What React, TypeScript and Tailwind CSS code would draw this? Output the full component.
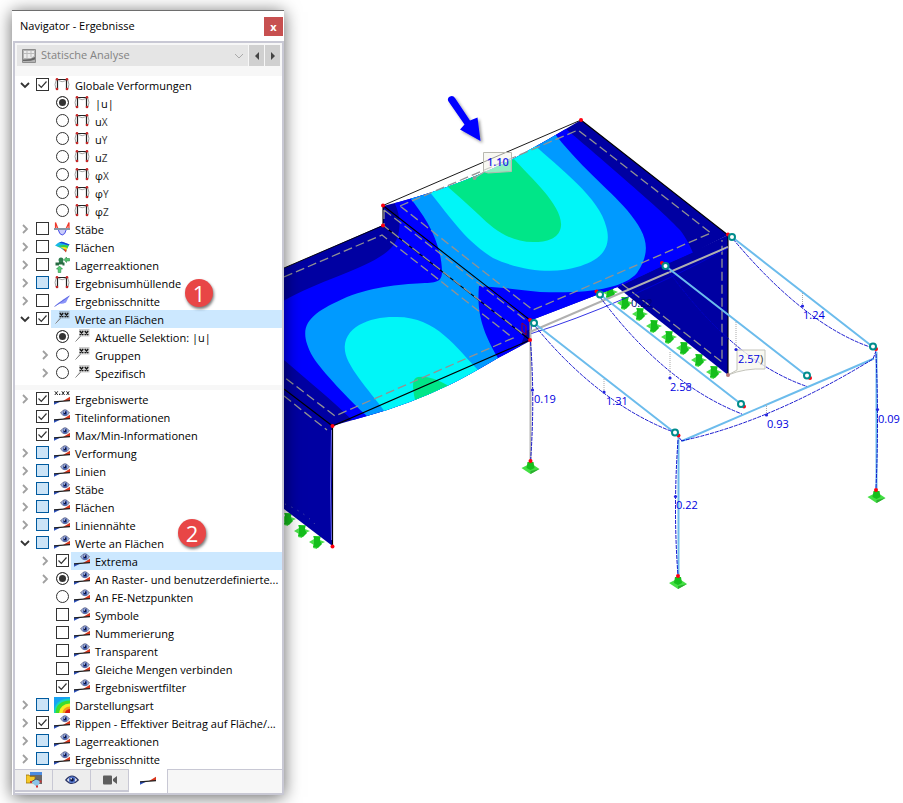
import React, { useState } from 'react';

type IconName = 'frame' | 'bars' | 'surface' | 'support' | 'section' | 'values' | 'numbers' | 'view' | 'plot';
type Control = 'radio' | 'checkbox';

interface TreeItem {
  id: string;
  label: React.ReactNode;
  icon: IconName;
  control: Control;
  checked?: boolean;
  partial?: boolean;
  level?: number;
  arrow?: 'open' | 'closed';
  selected?: boolean;
  group?: string;
}

const axis = (symbol: string, sub: string) => (
  <>
    {symbol}
    <span className="text-[10px] text-[#333]">{sub}</span>
  </>
);

const resultItems: TreeItem[] = [
  { id: 'deform', label: 'Globale Verformungen', icon: 'frame', control: 'checkbox', checked: true, arrow: 'open' },
  { id: 'u', label: '|u|', icon: 'frame', control: 'radio', checked: true, level: 1, group: 'deform' },
  { id: 'ux', label: axis('u', 'X'), icon: 'frame', control: 'radio', level: 1, group: 'deform' },
  { id: 'uy', label: axis('u', 'Y'), icon: 'frame', control: 'radio', level: 1, group: 'deform' },
  { id: 'uz', label: axis('u', 'Z'), icon: 'frame', control: 'radio', level: 1, group: 'deform' },
  { id: 'phix', label: axis('φ', 'X'), icon: 'frame', control: 'radio', level: 1, group: 'deform' },
  { id: 'phiy', label: axis('φ', 'Y'), icon: 'frame', control: 'radio', level: 1, group: 'deform' },
  { id: 'phiz', label: axis('φ', 'Z'), icon: 'frame', control: 'radio', level: 1, group: 'deform' },
  { id: 'members', label: 'Stäbe', icon: 'bars', control: 'checkbox', arrow: 'closed' },
  { id: 'surfaces', label: 'Flächen', icon: 'surface', control: 'checkbox', arrow: 'closed' },
  { id: 'reactions', label: 'Lagerreaktionen', icon: 'support', control: 'checkbox', arrow: 'closed' },
  { id: 'envelope', label: 'Ergebnisumhüllende', icon: 'frame', control: 'checkbox', partial: true, arrow: 'closed' },
  { id: 'sections', label: 'Ergebnisschnitte', icon: 'section', control: 'checkbox', arrow: 'closed' },
  { id: 'values', label: 'Werte an Flächen', icon: 'values', control: 'checkbox', checked: true, arrow: 'open', selected: true },
  { id: 'current', label: 'Aktuelle Selektion: |u|', icon: 'values', control: 'radio', checked: true, level: 1, group: 'values' },
  { id: 'groups', label: 'Gruppen', icon: 'values', control: 'radio', level: 1, arrow: 'closed', group: 'values' },
  { id: 'specific', label: 'Spezifisch', icon: 'values', control: 'radio', level: 1, arrow: 'closed', group: 'values' },
];

const displayItems: TreeItem[] = [
  { id: 'd-results', label: 'Ergebniswerte', icon: 'numbers', control: 'checkbox', checked: true, arrow: 'closed' },
  { id: 'd-title', label: 'Titelinformationen', icon: 'view', control: 'checkbox', checked: true },
  { id: 'd-maxmin', label: 'Max/Min-Informationen', icon: 'view', control: 'checkbox', checked: true },
  { id: 'd-deform', label: 'Verformung', icon: 'view', control: 'checkbox', partial: true, arrow: 'closed' },
  { id: 'd-lines', label: 'Linien', icon: 'view', control: 'checkbox', partial: true, arrow: 'closed' },
  { id: 'd-members', label: 'Stäbe', icon: 'view', control: 'checkbox', partial: true, arrow: 'closed' },
  { id: 'd-surfaces', label: 'Flächen', icon: 'view', control: 'checkbox', partial: true, arrow: 'closed' },
  { id: 'd-welds', label: 'Liniennähte', icon: 'view', control: 'checkbox', partial: true, arrow: 'closed' },
  { id: 'd-values', label: 'Werte an Flächen', icon: 'view', control: 'checkbox', partial: true, arrow: 'open' },
  { id: 'd-extrema', label: 'Extrema', icon: 'view', control: 'checkbox', checked: true, level: 1, arrow: 'closed', selected: true },
  { id: 'd-grid', label: 'An Raster- und benutzerdefinierte...', icon: 'view', control: 'radio', checked: true, level: 1, arrow: 'closed', group: 'points' },
  { id: 'd-mesh', label: 'An FE-Netzpunkten', icon: 'view', control: 'radio', level: 1, group: 'points' },
  { id: 'd-symbols', label: 'Symbole', icon: 'view', control: 'checkbox', level: 1 },
  { id: 'd-numbering', label: 'Nummerierung', icon: 'view', control: 'checkbox', level: 1 },
  { id: 'd-transparent', label: 'Transparent', icon: 'view', control: 'checkbox', level: 1 },
  { id: 'd-equal', label: 'Gleiche Mengen verbinden', icon: 'view', control: 'checkbox', level: 1 },
  { id: 'd-filter', label: 'Ergebniswertfilter', icon: 'view', control: 'checkbox', checked: true, level: 1 },
  { id: 'd-type', label: 'Darstellungsart', icon: 'plot', control: 'checkbox', partial: true, arrow: 'closed' },
  { id: 'd-ribs', label: 'Rippen - Effektiver Beitrag auf Fläche/...', icon: 'view', control: 'checkbox', checked: true, arrow: 'closed' },
  { id: 'd-reactions', label: 'Lagerreaktionen', icon: 'view', control: 'checkbox', partial: true, arrow: 'closed' },
  { id: 'd-sections', label: 'Ergebnisschnitte', icon: 'view', control: 'checkbox', partial: true, arrow: 'closed' },
];

const Wedge: React.FC = () => (
  <>
    <path d="M0 10.5H6.5L0 13.8Z" fill="#2b50c0" />
    <path d="M16 5.8V10H9Z" fill="#d8361c" />
    <path d="M0 10.8 16 9.6" stroke="#222" strokeWidth="1.2" />
  </>
);

const Eye: React.FC = () => (
  <>
    <path d="M6.6 4Q11 -2.5 15.4 4Q11 9.5 6.6 4Z" fill="#d5dcf2" stroke="#3a4470" strokeWidth=".8" />
    <circle cx="11" cy="3.9" r="2.5" fill="#4a66b8" />
    <circle cx="11" cy="3.9" r="1.4" fill="#0c1440" />
    <circle cx="10.3" cy="3" r=".7" fill="#fff" />
  </>
);

const icons: Record<IconName, React.ReactNode> = {
  frame: (
    <>
      <path d="M2.2 3Q0 7.5 2 12M13.8 3Q16 7.5 14 12M4.5 3.5Q8 6 12 3.5" fill="none" stroke="#999" strokeWidth=".9" />
      <path d="M3.5 12.500V2.500H12.500V12.500" fill="none" stroke="#222" strokeWidth="1.2" />
      <circle cx="3" cy="2.300" r="1.300" fill="#c62828" />
      <circle cx="13" cy="2.300" r="1.300" fill="#c62828" />
      <circle cx="3" cy="12" r="1.300" fill="#c62828" />
      <circle cx="13" cy="12" r="1.300" fill="#c62828" />
    </>
  ),
  bars: (
    <>
      <path d="M4 8H12.5Q11 14 8.2 14Q5.5 14 4 8Z" fill="#c9ccfb" stroke="#4a4fe6" />
      <path d="M1.5 8V1.5L4 8ZM15 8V1.5L12 8Z" fill="#fbc4bd" stroke="#ef3a2c" strokeWidth="1.2" />
      <path d="M0 8H16" stroke="#8696a6" strokeWidth="2" />
    </>
  ),
  surface: (
    <>
      <path d="M1 6.5Q5 2 9 3L15.5 5.5Q13 9 12 13Q7 8.5 1 6.5Z" fill="#18b8e8" />
      <path d="M5 3.8Q7 2.5 9 3L15.500 5.500L14.500 6.500Q9 4.500 5 3.8Z" fill="#1746d8" />
      <path d="M3 7.5Q8 5 14.500 6.500L13.300 9.500Q9 7 3 7.5Z" fill="#3bd23d" />
      <path d="M6 8.5Q10 7.500 13.300 9L12.500 11.500Q9 9 6 8.5Z" fill="#f6e61c" />
      <path d="M9 10Q11 10 12.500 11L12 13.500Z" fill="#ef3b1e" />
    </>
  ),
  support: (
    <>
      <circle cx="7" cy="3" r="2.5" fill="#2e7d4e" />
      <path d="M5 5H9L10.5 7.5H3.5ZM1.5 5.5H5V8.5H1.5ZM8.5 5.5H10.5V8.5H8.5Z" fill="#286c43" />
      <path d="M10 2.7 12.5 0V1.5H15.5V4H12.5V5.5Z" fill="#52c46e" stroke="#2a8a48" strokeWidth=".6" />
      <path d="M5.5 9 8.5 12H6.8V15.5H4.2V12H2.5Z" fill="#52d071" stroke="#2a8a48" strokeWidth=".6" />
    </>
  ),
  section: (
    <>
      <path d="M.5 13.500 4.500 9.800Q7 8.500 9 6.500L15.500 2.500 12 9.500Q8 11.500 6 10.500Z" fill="#8b95fa" />
      <path d="M.5 13.500 15.500 3" stroke="#5560d8" strokeWidth=".8" />
    </>
  ),
  values: (
    <>
      <path d="M5 0H15.500V7.500H7L1.500 12.500L5 7Z" fill="#000" fillOpacity=".2" />
      <path d="M1.500 12.500 6.500 7.500" stroke="#888" />
      <path d="M5.800 2 9.200 6M9.200 2 5.800 6M10.800 2 14.200 6M14.200 2 10.800 6" stroke="#111" strokeWidth="1.200" />
    </>
  ),
  numbers: (
    <>
      <path d="M.8 .3 3.800 4M3.800 .3 .8 4M7.800 .3 10.500 4M10.500 .3 7.800 4M12.500 .3 15.200 4M15.200 .3 12.500 4" stroke="#222" />
      <path d="M5 2.800H6.300V4.100H5Z" fill="#222" />
      <Wedge />
    </>
  ),
  view: (
    <>
      <Wedge />
      <Eye />
    </>
  ),
  plot: (
    <>
      <path d="M0 0H16V16H0Z" fill="#17a2f2" />
      <path d="M0 16Q0 2 16 1.500V16Z" fill="#16d6c0" />
      <path d="M1.500 16Q2 4 16 3.500V16Z" fill="#3ede2b" />
      <path d="M5 16Q6 7 16 6.500V16Z" fill="#f3ee22" />
      <path d="M8.500 16Q9 10 16 9.500V16Z" fill="#f59a1c" />
      <path d="M11 16Q11.500 12.500 16 12V16Z" fill="#d81e10" />
    </>
  ),
};

const Icon: React.FC<{ name: IconName }> = ({ name }) => (
  <svg viewBox="0 0 16 16" className="size-4 shrink-0" aria-hidden="true">
    {icons[name]}
  </svg>
);

const Tick: React.FC<{ item: TreeItem }> = ({ item }) => {
  const [on, setOn] = useState(!!item.checked);

  if (item.control === 'radio') {
    return (
      <input
        type="radio"
        id={item.id}
        name={item.group}
        defaultChecked={item.checked}
        className="mb-px size-[13px] shrink-0 appearance-none rounded-full border border-[#333] bg-white checked:bg-[#333] checked:shadow-[inset_0_0_0_2px_#fff]"
      />
    );
  }

  return (
    <span className="mb-px grid size-[13px] shrink-0">
      <input
        type="checkbox"
        id={item.id}
        checked={on}
        onChange={() => setOn(!on)}
        className={`col-start-1 row-start-1 size-[13px] appearance-none border ${
          item.partial ? 'border-[#005a9e] bg-[#cce4f7]' : 'border-[#333] bg-white'
        }`}
      />
      {on && (
        <svg viewBox="0 0 13 13" className="pointer-events-none col-start-1 row-start-1 size-[13px]" aria-hidden="true">
          <path d="M2.5 6.5 5.300 9.300 10.500 3.500" fill="none" stroke="#333" strokeWidth="1.200" />
        </svg>
      )}
    </span>
  );
};

const TreeRow: React.FC<{ item: TreeItem }> = ({ item }) => (
  <li className={`flex h-[18px] items-center ${item.level ? 'pl-[25px]' : 'pl-[5px]'}`}>
    <span className="flex w-4 shrink-0">
      {item.arrow && (
        <button type="button" aria-label={item.arrow === 'open' ? 'Zuklappen' : 'Aufklappen'}>
          <svg viewBox="0 0 10 10" className="size-[10px]" aria-hidden="true">
            {item.arrow === 'open' ? (
              <path d="M1 3 5 7 9 3" fill="none" stroke="#333" strokeWidth="1.800" />
            ) : (
              <path d="M3 1 7 5 3 9" fill="none" stroke="#a0a0a0" strokeWidth="1.800" />
            )}
          </svg>
        </button>
      )}
    </span>
    <Tick item={item} />
    <label
      htmlFor={item.id}
      className={`ml-[2px] flex h-[18px] min-w-0 grow items-center gap-[5px] pl-[3px] ${item.selected ? 'bg-[#cce8ff]' : ''}`}
    >
      <Icon name={item.icon} />
      <span className="pt-[2px] leading-4 whitespace-nowrap">{item.label}</span>
    </label>
  </li>
);

const tabs = [
  {
    name: 'Daten',
    icon: (
      <svg viewBox="0 0 16 16" className="size-4" aria-hidden="true">
        <path d="M4 0H16V12H9V6H4Z" fill="#686868" />
        <path d="M4 0H16V3H4Z" fill="#4b8be0" />
        <path d="M0 3H3L4 4.500H9V11H0Z" fill="#f6c928" stroke="#9a7410" strokeWidth=".8" />
        <path d="M5 10 10 7 15 9 11 15Z" fill="#8cc4e8" />
        <path d="M5 10 10 7 15 9" fill="none" stroke="#555" />
        <path d="M4 9H6V11H4ZM13.500 8.500H15.500V10.500H13.500ZM10 13.500H12V15.500H10Z" fill="#d32f2f" />
      </svg>
    ),
  },
  {
    name: 'Zeigen',
    icon: (
      <svg viewBox="0 0 14 10" className="h-[10px] w-[14px]" aria-hidden="true">
        <path d="M.8 5Q7-2.600 13.200 5Q7 12 .8 5Z" fill="#fff" stroke="#2d3768" strokeWidth="1.200" />
        <circle cx="7" cy="4.800" r="3.300" fill="#4b6fc8" />
        <circle cx="7" cy="4.800" r="1.800" fill="#0c1440" />
        <circle cx="6.200" cy="3.800" r=".8" fill="#fff" />
      </svg>
    ),
  },
  {
    name: 'Ansichten',
    icon: (
      <svg viewBox="0 0 16 10" className="h-[10px] w-4" aria-hidden="true">
        <path d="M1.500 .5H9Q10 .5 10 1.500V8.500Q10 9.500 9 9.500H2Q1 9.500 1 8.500V1.500ZM11 4 15 1V9L11 6Z" fill="#5e5e5e" />
      </svg>
    ),
  },
  {
    name: 'Ergebnisse',
    icon: (
      <svg viewBox="0 4 16 12" className="h-3 w-4" aria-hidden="true">
        <Wedge />
      </svg>
    ),
  },
];

const Callout: React.FC<{ n: number; place: string }> = ({ n, place }) => (
  <span
    className={`absolute grid size-7 place-items-center rounded-full bg-[#e84646] text-[22px] leading-none text-white shadow-[1px_2px_3px_#0008] ${place}`}
  >
    {n}
  </span>
);

const Navigator: React.FC = () => (
  <aside className="relative z-10 mt-[10px] mb-2 ml-3 flex w-[272px] shrink-0 flex-col border-t border-[#6e6e6e] bg-white pl-px text-[11px] text-black shadow-[0_2px_16px_#0009]">
    <header className="flex h-[30px] items-center justify-between pr-px pl-[7px]">
      <h1>Navigator - Ergebnisse</h1>
      <button type="button" className="grid size-[19px] place-items-center bg-[#c75050] leading-none font-bold text-white" aria-label="Schließen">
        x
      </button>
    </header>

    <div className="flex grow flex-col border-2 border-[#c8c8d4]">
      <div className="bg-[#f7f7f7] px-[2px] pt-[2px] pb-[10px]">
        <div className="flex h-[21px] gap-px">
          <div className="grid min-w-0 grow items-center bg-[#e5e5e5]">
            <select
              disabled
              aria-label="Analyse"
              className="col-start-1 row-start-1 h-[21px] w-full appearance-none pl-6 text-[#838383] opacity-100"
            >
              <option>Statische Analyse</option>
            </select>
            <svg viewBox="0 0 14 14" className="col-start-1 row-start-1 ml-[5px] size-[14px]" aria-hidden="true">
              <path d="M.5 .5H13.500V13.500H.5Z" fill="#b4b4b4" stroke="#8c8c8c" />
              <path d="M2 2H12V7L9 9H2Z" fill="#ececec" />
              <path d="M2 4.500H12M5 2V9M9 2V8" stroke="#bbb" />
              <path d="M1 12V10.500Q8 11 13 8V10.500Q8 12.500 1 12Z" fill="#666" />
            </svg>
            <svg viewBox="0 0 10 6" className="col-start-1 row-start-1 mr-1 h-[6px] w-[10px] justify-self-end" aria-hidden="true">
              <path d="M1 1 5 5 9 1" fill="none" stroke="#aaa" />
            </svg>
          </div>
          <button type="button" aria-label="Zurück" className="grid w-[15px] place-items-center bg-[#d0d0d0]">
            <svg viewBox="0 0 4 8" className="h-2 w-1"><path d="M4 0V8L0 4Z" fill="#444" /></svg>
          </button>
          <button type="button" aria-label="Weiter" className="grid w-[15px] place-items-center bg-[#d0d0d0]">
            <svg viewBox="0 0 4 8" className="h-2 w-1"><path d="M0 0V8L4 4Z" fill="#444" /></svg>
          </button>
        </div>
      </div>

      <ul className="pb-[3px]">
        {resultItems.map((item) => (
          <TreeRow key={item.id} item={item} />
        ))}
      </ul>
      <ul className="border-t-[5px] border-[#f7f7f7]">
        {displayItems.map((item) => (
          <TreeRow key={item.id} item={item} />
        ))}
      </ul>

      {/* Tabs */}
      <nav className="mt-px flex grow bg-[#f7f7f7]">
        {tabs.map((tab, i) => (
          <button
            key={tab.name}
            type="button"
            aria-label={tab.name}
            className={`grid place-items-center border-[#c8c8d4] ${
              i === tabs.length - 1 ? 'h-6 w-[39px] border-r bg-white' : 'h-[23px] w-[38px] border-t border-r border-b-2 bg-[#ededed]'
            }`}
          >
            {tab.icon}
          </button>
        ))}
        <span className="grow border-t border-[#c8c8d4]" />
      </nav>
    </div>

    <Callout n={1} place="top-[268px] left-[173px]" />
    <Callout n={2} place="top-[508px] left-[166px]" />
  </aside>
);

const hinges = [[732, 237], [665.5, 266], [600, 294.5], [534, 323], [873, 346.5], [807, 375.5], [741, 404], [675, 432.5]];
const nodes = [
  [581, 120], [383, 205.5], [383, 225.5], [728, 234.5], [662, 263], [596.5, 291.5], [530, 320], [530, 340],
  [332.5, 426], [332.5, 546.5], [876, 349], [810, 378], [744, 406.5], [678.5, 435.5], [530.5, 461], [678, 576], [876, 490],
];
const peaks = [[802.5, 306], [736, 349.5], [670, 378], [604, 392], [766.5, 415], [532.5, 390], [675.5, 496.5], [877.5, 409.5]];
const wallSupports = [[610, 291], [625, 302], [640, 313], [654, 325], [669, 336], [684, 347], [699, 359], [714, 371], [288, 518], [302, 530], [317, 541]];

const values = [
  { x: 803, y: 319, text: '1.24' },
  { x: 670, y: 391, text: '2.58' },
  { x: 606, y: 405, text: '1.31' },
  { x: 767, y: 428, text: '0.93' },
  { x: 534, y: 403, text: '0.19' },
  { x: 676, y: 509, text: '0.22' },
  { x: 878, y: 423, text: '0.09' },
  { x: 738, y: 363, text: '2.57' },
];

const Model: React.FC = () => (
  <svg viewBox="284 0 619 803" className="block h-auto w-full" role="img" fontFamily="Open Sans, sans-serif" fontSize="11">
    <defs>
      <clipPath id="deck">
        <path d="M284 268 383 225V206Q450 190 513 159Q548 140 581 120L728 235 693 252.500 620 286 533 319.500 530 341 498 358Q464 378 449 385Q410 404 367 416L332 426 284 390Z" />
      </clipPath>
      <filter id="soft" x="-50%" y="-50%" width="200%" height="200%">
        <feDropShadow dx="2" dy="2" stdDeviation="1.500" floodOpacity=".4" />
      </filter>
    </defs>

    {/* Line supports */}
    {wallSupports.map(([x, y]) => (
      <g key={x} transform={`translate(${x} ${y})`}>
        <path d="M-8 1-3-2-4-5 4-5 3-1 8 1 1 4 0 8-4 7-3 4Z" fill="#4be04b" />
        <path d="M-3-5 3-4V0L5 3 1 7-4 6-3 2Z" fill="#14be1c" />
      </g>
    ))}

    {/* Plates */}
    <path d="M284 388 332.500 426V546L284 509Z" fill="#0000a2" />
    <path d="M617 287 728 235V375Z" fill="#0000a2" />
    <g clipPath="url(#deck)">
      <path d="M284 100H740V430H284Z" fill="#0000a2" />
      <path d="M284 300.500C320 280 375 266 391 248C401 238 402 218 395 204V195L565 128C600 158 665 213 680 230C687 239 690 246 693 253L667 264 540 325 526 331 519 350 500 420H352C334 402 305 378 284 360Z" fill="#00f" />
      <path d="M367 416C352 403 320 369 313 357C295 325 309 314 347 297C375 286 405 284 425 283C440 283 442 279 442 271C441 240 424 215 410 198L552 130C578 165 609 189 627 210C646 233 653 249 637 273C624 288 590 294 540 292Q508 288 479 286C477 308 480 328 498 358L470 400Z" fill="#009aff" />
      <path d="M428 190C449 215 464 240 493 258C525 273 558 273 577 267C599 261 613 249 606 226C600 199 560 168 532 143Z" fill="#00f6f8" />
      <path d="M448 180 514 159C531 178 563 206 561 226C560 237 549 242 536 242C513 243 496 232 478 214Q463 200 448 187Z" fill="#00e688" />
      <path d="M385 412C375 397 347 368 345 351C342 326 372 316 397 317C437 317 456 348 479 371L440 410Z" fill="#00f6f8" />
      <path d="M415 400C412 386 412 378 418 377Q430 375 449 386L430 400Z" fill="#00e688" />
    </g>

    {/* Undeformed edges */}
    <g fill="none" stroke="#000">
      <path d="M284 268 383 225.500M383 205.500 581 120" strokeWidth=".9" />
      <path d="M581 120 728 235V375M383 205.500V225.500L530 340M383 205.500 530 320V340L332.500 426L284 389" strokeWidth="1.100" />
      <path d="M332.500 426V546" strokeWidth="1.200" />
    </g>
    <path d="M331.500 430Q329.500 487 331.500 540" fill="none" stroke="#99f" strokeWidth=".7" />
    <g fill="none" stroke="#929292" strokeWidth="1.300" strokeDasharray="9 4">
      <path d="M400 206 578 130 711 233 533 310Z" />
      <path d="M384 210V226L523 334M384 210 527 321" />
      <path d="M284 277 382 235 513 338 335 416 284 377" />
      <path d="M284 396 327 430" />
      <path d="M622 284 722 362V240" />
    </g>
    <path d="M285 504Q308 514 318 528" fill="none" stroke="#66a" strokeDasharray="1 6" />
    <path d="M522 323V331L526 335V326Z" fill="none" stroke="#a00020" />

    {/* Members */}
    <path d="M530 332 728 247" stroke="#b0b0b0" strokeWidth="2" />
    <path d="M530 334 Q620 306 728 248" fill="none" stroke="#00d" strokeWidth=".8" />
    <path d="M530.500 322V462" stroke="#b4b4b4" strokeWidth="2" />
    <g stroke="#6cbcec" strokeWidth="2">
      <path d="M732 237 873 347M665.500 266 807 376M600 294.500 741 404M534 323 675 433M682 441 874 358.500M678.500 436V576M876.500 352V490" />
    </g>
    <g fill="none" stroke="#0000c8" strokeWidth=".9" strokeDasharray="4 1">
      <path d="M733 239Q806 326 873 348M667 269Q733 361 807 386.500M600 297Q665 384 742 414M535 326Q600 405 676 433" />
      <path d="M681 441Q770 422 873 359L876 351M676 434 682 441" />
      <path d="M530.500 342Q535 400 530.500 462M678 440Q673 510 678 576M876 354Q879 420 876 488" />
    </g>
    <path d="M802.500 293V305M736 322V348M670 352V377M604 379V391M766.500 404V414" stroke="#aaa" strokeDasharray="1 1" />
    <path d="M737 350H765V369Q745 368 728 375L737 370Z" fill="#f8f7ee" fillOpacity=".8" stroke="#c4c4bc" />
    {peaks.map(([x, y]) => (
      <circle key={x} cx={x} cy={y} r="1.600" fill="#2424e0" />
    ))}

    {/* Nodal supports */}
    {[[530.5, 468], [678, 583], [876.5, 497]].map(([x, y]) => (
      <g key={x} transform={`translate(${x} ${y})`}>
        <path d="M-9 0-3-3 0-7 3-3 9 1 0 6Z" fill="#44e044" />
        <path d="M0 3 9 1 0 6Z" fill="#2cae30" />
        <path d="M-3-6H3L4 0 0 2-4 0Z" fill="#17bf1d" />
      </g>
    ))}
    {nodes.map(([x, y]) => (
      <circle key={`${x}-${y}`} cx={x} cy={y} r="2" fill="#ff0010" />
    ))}
    <circle cx="728" cy="375" r="2" fill="#b87878" />
    {hinges.map(([x, y]) => (
      <circle key={x} cx={x} cy={y} r="3" fill="#fff" stroke="#008c8c" strokeWidth="2" />
    ))}

    {/* Result values */}
    <g fill="#0000e0">
      {values.map((v) => (
        <text key={`${v.x}-${v.y}`} x={v.x} y={v.y}>{v.text}</text>
      ))}
      <text x="631" y="307" fill="#000078">0.22</text>
      <text x="760" y="363" fill="#333">)</text>
    </g>
    <path d="M474.500 178 484 172" stroke="#aaa" strokeWidth="1.300" />
    <circle cx="474.500" cy="178" r="2" fill="#999" />
    <path d="M483.500 152.500H511.500V171.500L488 173 483.500 171.500Z" fill="#f4f4ea" fillOpacity=".6" stroke="#b8b8b0" />
    <text x="487" y="166" fill="#2626e8" fontWeight="600">1.10</text>

    <path d="M448.200 101Q447 98 450 96.500Q453 95 455 98L470 120.500 477.500 117.500 480.500 141 460 129.500 464.500 124.500Z" fill="#00f" filter="url(#soft)" />
  </svg>
);

const App: React.FC = () => (
  <main className="flex min-h-screen items-start overflow-hidden bg-white font-['Open_Sans',sans-serif]">
    <Navigator />
    <section className="min-w-0 grow">
      <Model />
    </section>
  </main>
);

export default App;
